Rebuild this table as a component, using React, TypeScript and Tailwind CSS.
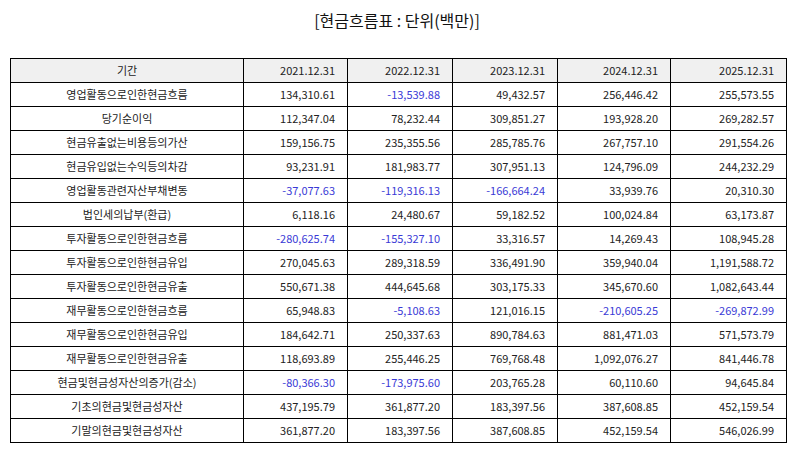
const COLUMNS = ["2021.12.31", "2022.12.31", "2023.12.31", "2024.12.31", "2025.12.31"];

const ROWS: [string, string[]][] = [
  ["영업활동으로인한현금흐름", ["134,310.61", "-13,539.88", "49,432.57", "256,446.42", "255,573.55"]],
  ["당기순이익", ["112,347.04", "78,232.44", "309,851.27", "193,928.20", "269,282.57"]],
  ["현금유출없는비용등의가산", ["159,156.75", "235,355.56", "285,785.76", "267,757.10", "291,554.26"]],
  ["현금유입없는수익등의차감", ["93,231.91", "181,983.77", "307,951.13", "124,796.09", "244,232.29"]],
  ["영업활동관련자산부채변동", ["-37,077.63", "-119,316.13", "-166,664.24", "33,939.76", "20,310.30"]],
  ["법인세의납부(환급)", ["6,118.16", "24,480.67", "59,182.52", "100,024.84", "63,173.87"]],
  ["투자활동으로인한현금흐름", ["-280,625.74", "-155,327.10", "33,316.57", "14,269.43", "108,945.28"]],
  ["투자활동으로인한현금유입", ["270,045.63", "289,318.59", "336,491.90", "359,940.04", "1,191,588.72"]],
  ["투자활동으로인한현금유출", ["550,671.38", "444,645.68", "303,175.33", "345,670.60", "1,082,643.44"]],
  ["재무활동으로인한현금흐름", ["65,948.83", "-5,108.63", "121,016.15", "-210,605.25", "-269,872.99"]],
  ["재무활동으로인한현금유입", ["184,642.71", "250,337.63", "890,784.63", "881,471.03", "571,573.79"]],
  ["재무활동으로인한현금유출", ["118,693.89", "255,446.25", "769,768.48", "1,092,076.27", "841,446.78"]],
  ["현금및현금성자산의증가(감소)", ["-80,366.30", "-173,975.60", "203,765.28", "60,110.60", "94,645.84"]],
  ["기초의현금및현금성자산", ["437,195.79", "361,877.20", "183,397.56", "387,608.85", "452,159.54"]],
  ["기말의현금및현금성자산", ["361,877.20", "183,397.56", "387,608.85", "452,159.54", "546,026.99"]],
];

export default function App() {
  return (
    <div
      className="w-[794px] h-[452px] bg-white text-[#222] overflow-hidden"
      style={{ fontFamily: '"Noto Sans CJK KR", "Noto Sans", sans-serif' }}
    >
      <h1 className="h-[40px] pt-[6px] text-center text-[16px] leading-[28px] text-[#111]">
        [현금흐름표 : 단위(백만)]
      </h1>
      <div className="pt-[18px] pl-[10px]">
        <table className="table-fixed border-collapse w-[776px] text-[11px]">
          <colgroup>
            <col className="w-[233px]" />
            <col className="w-[104px]" />
            <col className="w-[105px]" />
            <col className="w-[105px]" />
            <col className="w-[113px]" />
            <col className="w-[116px]" />
          </colgroup>
          <thead>
            <tr className="h-[24px] bg-[#f0f0f0]">
              <th className="border border-black font-normal text-center p-0">기간</th>
              {COLUMNS.map((c) => (
                <th key={c} className="border border-black font-normal text-right pr-[12px] p-0">
                  {c}
                </th>
              ))}
            </tr>
          </thead>
          <tbody>
            {ROWS.map(([label, values]) => (
              <tr key={label} className="h-[24px]">
                <td className="border border-black text-center p-0">{label}</td>
                {values.map((v, i) => (
                  <td
                    key={i}
                    className={`border border-black text-right p-0 pr-[12px] ${
                      v.startsWith("-") ? "text-[#3a3ad6]" : ""
                    }`}
                  >
                    {v}
                  </td>
                ))}
              </tr>
            ))}
          </tbody>
        </table>
      </div>
    </div>
  );
}
